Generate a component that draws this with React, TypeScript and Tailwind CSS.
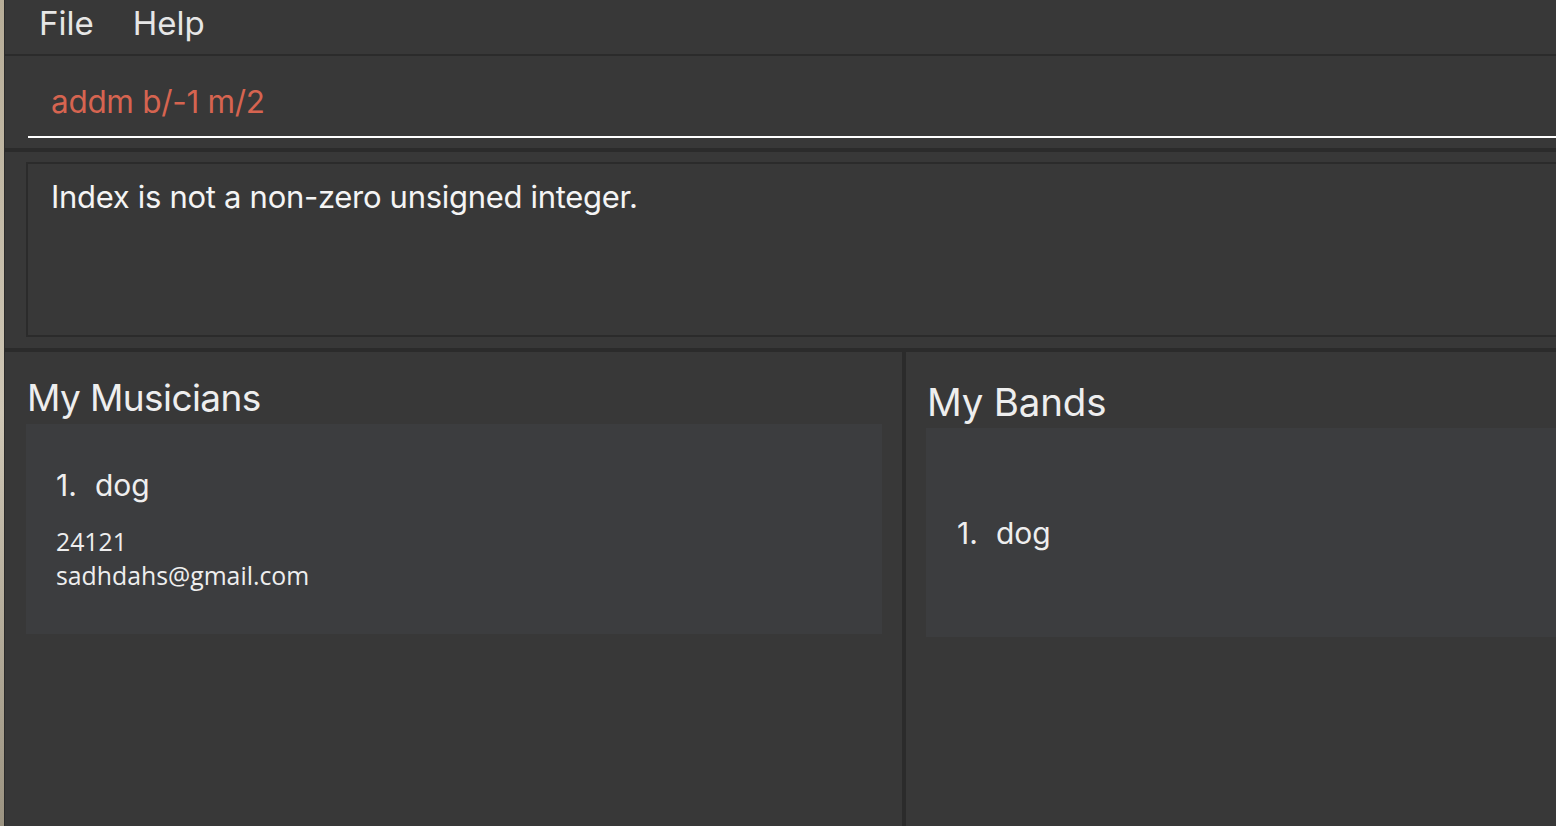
import React from 'react';

const sans = { fontFamily: 'Inter, "Noto Sans", sans-serif' };

function MusicianCard() {
  return (
    <div className="ml-[21px] mr-[20px] mt-[2px] h-[210px] bg-[#3c3d3f] pl-[30px] pt-[43px]">
      <div className="flex text-[30px] leading-[36px] text-[#eeeeee]">
        <span className="w-[39px]">1.</span>
        <span>dog</span>
      </div>
      <div
        className="mt-[21px] text-[24.8px] leading-[34px] text-[#eeeeee]"
        style={{ fontFamily: '"Open Sans", sans-serif' }}
      >
        <div>24121</div>
        <div>sadhdahs@gmail.com</div>
      </div>
    </div>
  );
}

function BandCard() {
  return (
    <div className="ml-[20px] mt-[2px] flex h-[209px] items-center bg-[#3c3d3f] pl-[31px]">
      <div className="flex text-[30px] leading-[36px] text-[#eeeeee]">
        <span className="w-[39px]">1.</span>
        <span>dog</span>
      </div>
    </div>
  );
}

export default function App() {
  return (
    <div className="flex h-[826px] w-[1556px] overflow-hidden bg-[#383838]" style={sans}>
      {/* desktop peeking through on the left */}
      <div className="w-[4px] bg-gradient-to-b from-[#b7ad98] via-[#cfc7b6] to-[#9b9381]" />
      <div className="w-[1px] bg-[#2b2b2b]" />

      <div className="flex min-w-0 flex-1 flex-col">
        {/* Menu bar */}
        <div className="flex h-[54px] items-center gap-[39px] pl-[34px] pb-[6px] text-[33px] text-[#e6e6e6]">
          <span>File</span>
          <span>Help</span>
        </div>
        <div className="h-[2px] bg-[#2b2b2b]" />

        {/* Command box */}
        <div className="h-[92px] pl-[23px] pt-[80px]">
          <div className="h-[2px] bg-white" />
        </div>
        <div className="-mt-[92px] h-[92px] pl-[46px] pt-[26px] text-[31.5px] leading-[40px] tracking-[-0.3px] text-[#d66450]">
          addm b/-1 m/2
        </div>
        <div className="h-[4px] bg-[#2b2b2b]" />

        {/* Result display */}
        <div className="h-[196px] pl-[21px] pt-[10px]">
          <div className="h-[175px] border-2 border-r-0 border-[#2b2b2b] pl-[23px] pt-[13px] text-[31px] leading-[40px] tracking-[-0.3px] text-[#f4f4f4]">
            Index is not a non-zero unsigned integer.
          </div>
        </div>
        <div className="h-[4px] bg-[#2b2b2b]" />

        {/* Lists */}
        <div className="flex flex-1">
          <div className="w-[897px]">
            <div className="pl-[22px] pt-[22px] text-[37px] leading-[48px] tracking-[-0.6px] text-[#eeeeee]">
              My Musicians
            </div>
            <MusicianCard />
          </div>
          <div className="w-[4px] bg-[#2b2b2b]" />
          <div className="flex-1">
            <div className="pl-[21px] pt-[26px] text-[38.5px] leading-[48px] tracking-[-0.2px] text-[#eeeeee]">
              My Bands
            </div>
            <BandCard />
          </div>
        </div>
      </div>
    </div>
  );
}
